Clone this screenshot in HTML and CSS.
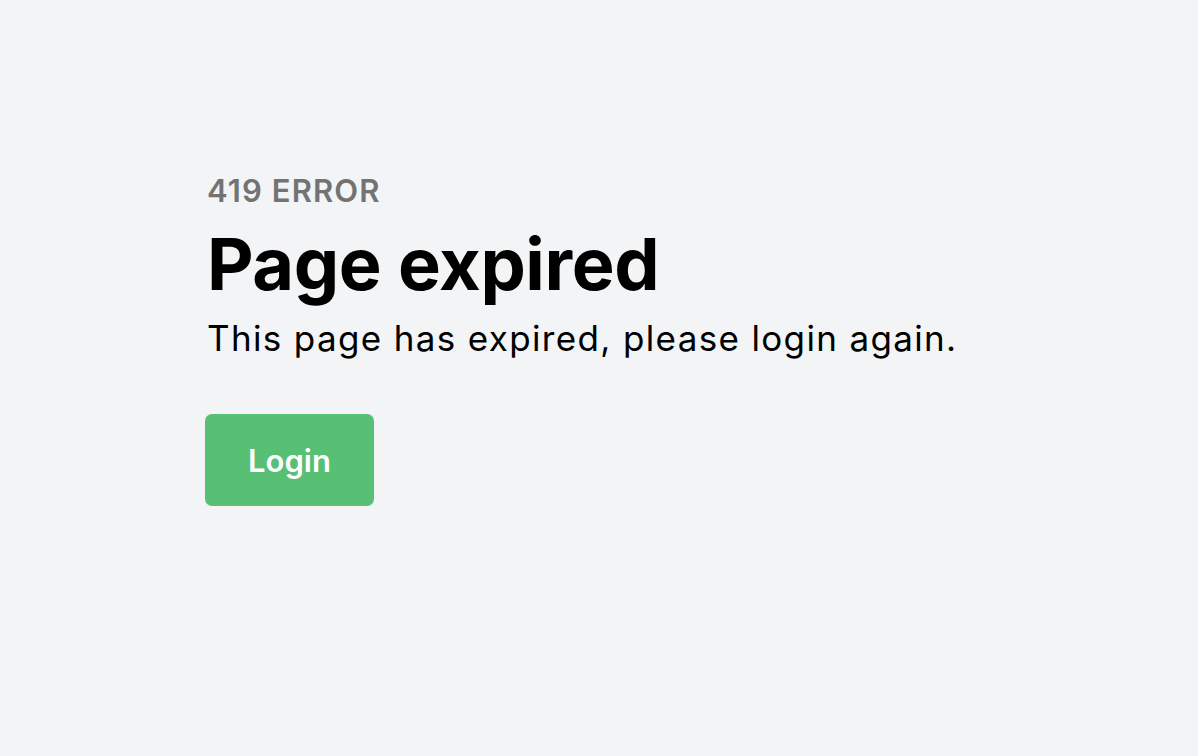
FILE: index.html
```html
<!DOCTYPE html>
<html lang="en">
<head>
<meta charset="utf-8">
<title>Page expired</title>
<link rel="stylesheet" href="styles.css">
</head>
<body>
<main class="page">
  <section class="content">
    <p class="code">419 ERROR</p>
    <h1 class="title">Page expired</h1>
    <p class="message">This page has expired, please login again.</p>
    <a class="button" href="#">Login</a>
  </section>
</main>
</body>
</html>
```

FILE: styles.css
```css
html, body {
  margin: 0;
  padding: 0;
  background: #f3f4f6;
  font-family: Inter, "Noto Sans", sans-serif;
  color: #000;
}
.page {
  min-height: 756px;
  box-sizing: border-box;
  padding: 169px 0 0 205px;
}
.content {
  display: flex;
  flex-direction: column;
  align-items: flex-start;
}
.code {
  margin: 0 0 0 2px;
  font-size: 31px;
  font-weight: 600;
  color: #737373;
  letter-spacing: 1.1px;
  line-height: 44px;
}
.title {
  margin: 6px 0 0 2px;
  font-size: 72px;
  font-weight: 700;
  line-height: 90px;
  letter-spacing: -0.4px;
}
.message {
  margin: 9px 0 0 2px;
  font-size: 35px;
  font-weight: 400;
  line-height: 40px;
  letter-spacing: 1.35px;
}
.button {
  margin-top: 56px;
  display: flex;
  align-items: center;
  justify-content: center;
  width: 169px;
  height: 92px;
  box-sizing: border-box;
  background: #58c074;
  border-radius: 7px;
  color: #fff;
  font-size: 31px;
  font-weight: 600;
  text-decoration: none;
}
```
